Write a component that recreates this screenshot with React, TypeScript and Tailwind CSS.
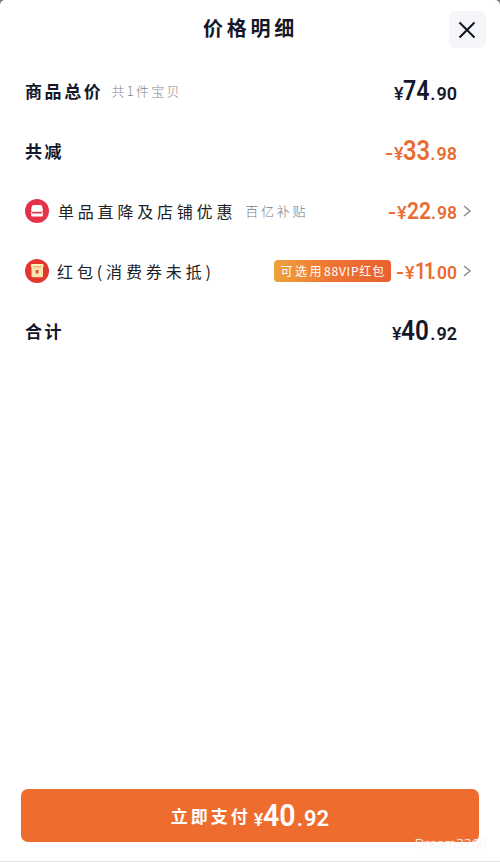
import { ReactNode } from "react";
import clsx from "clsx";

type Price = {
  int: string;
  dec: string;
  minus?: boolean;
};

const Amount = ({
  price,
  className,
  intClass,
  decClass,
}: {
  price: Price;
  className?: string;
  intClass: string;
  decClass: string;
}) => {
  return (
    <span
      className={clsx(
        "flex items-baseline whitespace-nowrap font-['Roboto',sans-serif] leading-none",
        className
      )}
    >
      {price.minus && (
        <span className="mr-[2px] inline-block origin-left scale-x-125 text-[18px] font-semibold">-</span>
      )}
      <span className="text-[18px] font-medium">¥</span>
      <span className={clsx("inline-block origin-left font-semibold", intClass)}>
        {price.int}
      </span>
      <span className={clsx("font-semibold", decClass)}>
        <span className="mr-px">.</span>
        {price.dec}
      </span>
    </span>
  );
};

const Row = ({ children }: { children: ReactNode }) => (
  <div className="flex h-[60px] items-center justify-between pl-[25px] pr-[43px]">
    {children}
  </div>
);

const Label = ({ children }: { children: ReactNode }) => (
  <span className="text-[17px] font-bold tracking-[2.6px] text-[#15172a]">
    {children}
  </span>
);

const Chevron = () => (
  <svg className="ml-1.5 -mr-[15px] shrink-0" width="9" height="12" viewBox="0 0 9 12" fill="none">
    <path d="M1 1 7 6 1 11" stroke="#8b8e99" strokeWidth="1.6" />
  </svg>
);

const ShopIcon = () => (
  <svg className="shrink-0" width="24" height="24" viewBox="0 0 24 24">
    <circle cx="12" cy="12" r="12" fill="#e5324b" />
    <path
      d="M8.3 6h7.4c.6 0 1 .3 1.2.8l1 3.7c.2 1.2-.6 2.2-1.6 2.2H7.7c-1 0-1.8-1-1.6-2.2l1-3.7c.2-.5.6-.8 1.2-.8Z"
      fill="#fff"
    />
    <path d="M6.2 12.8v3.4c0 .8.5 1.4 1.3 1.4h9c.8 0 1.3-.6 1.3-1.4v-3.4" fill="#fff" />
    <path d="M7.2 13h9.6v1.5H7.2z" fill="#e5324b" />
  </svg>
);

const PacketIcon = () => (
  <svg className="shrink-0" width="24" height="24" viewBox="0 0 24 24">
    <circle cx="12" cy="12" r="12" fill="#e2362f" />
    <rect x="6" y="5" width="12.5" height="3.5" rx="1" fill="#fdf0bd" />
    <rect x="6.5" y="7" width="11.5" height="11.3" rx="1" fill="#fbe6ae" />
    <path d="M8 7.8h8.5" stroke="#e88954" strokeWidth=".8" />
    <path d="m10.8 11 1.3 1.4 1.3-1.4M10.6 13.1h3M12.1 12.4v2.6" stroke="#e2362f" strokeWidth="1.1" fill="none" />
  </svg>
);

const App = () => {
  return (
    <div className="h-[862px] w-[500px] overflow-hidden bg-[#777] font-['Noto_Sans_CJK_SC',sans-serif]">
      <div className="relative flex h-full flex-col rounded-t-[5px] border-b border-[#e4e4e4] bg-white">
        <header className="flex h-[61px] shrink-0 items-start justify-center">
          <h1 className="mt-[13px] pl-px text-[20px] font-bold leading-[30px] tracking-[3.7px] text-[#15172a]">
            价格明细
          </h1>
          <button className="absolute right-[14px] top-[11px] flex size-[37px] items-center justify-center rounded-md bg-[#f4f6fa]">
            <svg className="-ml-px" width="18" height="18" viewBox="0 0 18 18" fill="none">
              <path d="m1.5 1.5 15 15m0-15-15 15" stroke="#111320" strokeWidth="2" />
            </svg>
          </button>
        </header>

        <main className="flex-1">
          <Row>
            <div className="flex items-center">
              <Label>商品总价</Label>
              <span className="ml-[8px] text-[13px] font-light tracking-[2.3px] text-[#85878d]">
                共1件宝贝
              </span>
            </div>
            <Amount
              price={{ int: "74", dec: "90" }}
              className="text-[#15172a]"
              intClass="text-[27px] scale-x-[0.86] mr-[-4px]"
              decClass="text-[18px]"
            />
          </Row>
          <Row>
            <Label>共减</Label>
            <Amount
              price={{ int: "33", dec: "98", minus: true }}
              className="text-[#e96c30]"
              intClass="text-[27px] scale-x-[0.88] mr-[-4px]"
              decClass="text-[18px]"
            />
          </Row>
          <Row>
            <div className="flex items-center">
              <ShopIcon />
              <span className="ml-[9px] text-[16px] tracking-[3.8px] text-[#202124]">
                单品直降及店铺优惠
              </span>
              <span className="ml-[9px] text-[13px] font-light tracking-[2.8px] text-[#777a83]">
                百亿补贴
              </span>
            </div>
            <div className="flex items-center">
              <Amount
                price={{ int: "22", dec: "98", minus: true }}
                className="text-[#e96c30]"
                intClass="text-[24px] scale-x-[0.88] mr-[-3px]"
                decClass="text-[17.5px]"
              />
              <Chevron />
            </div>
          </Row>
          <Row>
            <div className="flex items-center">
              <PacketIcon />
              <span className="ml-[8px] text-[16px] tracking-[3.9px] text-[#202124]">
                红包(消费券未抵)
              </span>
            </div>
            <div className="flex items-center">
              <span className="mr-[5px] flex h-[22px] w-[117px] items-center justify-center whitespace-nowrap rounded-[4px] bg-linear-to-r from-[#efa03c] via-[#ed7433] to-[#e9602f] text-[12px] text-white">
                <span className="tracking-[2.5px]">可选用</span>
                <span className="tracking-[0.8px]">88VIP</span>
                <span className="tracking-[1px]">红包</span>
              </span>
              <Amount
                price={{ int: "11", dec: "00", minus: true }}
                className="text-[#e96c30]"
                intClass="text-[24px] tracking-[-2.5px] scale-x-[0.8] mr-[-6px]"
                decClass="text-[17.5px]"
              />
              <Chevron />
            </div>
          </Row>
          <Row>
            <Label>合计</Label>
            <Amount
              price={{ int: "40", dec: "92" }}
              className="text-[#15172a]"
              intClass="text-[27px] scale-x-[0.9] mr-[-2px]"
              decClass="text-[18px]"
            />
          </Row>
        </main>

        <footer className="px-[21px] pb-[19px]">
          <button className="flex h-[53px] w-full items-center justify-center rounded-[7px] bg-[#ee6d2e] text-white">
            <span className="mr-[3px] text-[17px] font-semibold tracking-[3px]">
              立即支付
            </span>
            <Amount
              price={{ int: "40", dec: "92" }}
              intClass="text-[31px] scale-x-[0.92] mr-[-2px]"
              decClass="text-[22px]"
            />
          </button>
        </footer>
        <span className="absolute bottom-[8px] right-[13px] font-['Noto_Sans',sans-serif] text-[13.5px] font-light leading-[20px] text-white/70 [text-shadow:0_0_1px_#e4e4e4]">
          Dream3266
        </span>
      </div>
    </div>
  );
};

export default App;
